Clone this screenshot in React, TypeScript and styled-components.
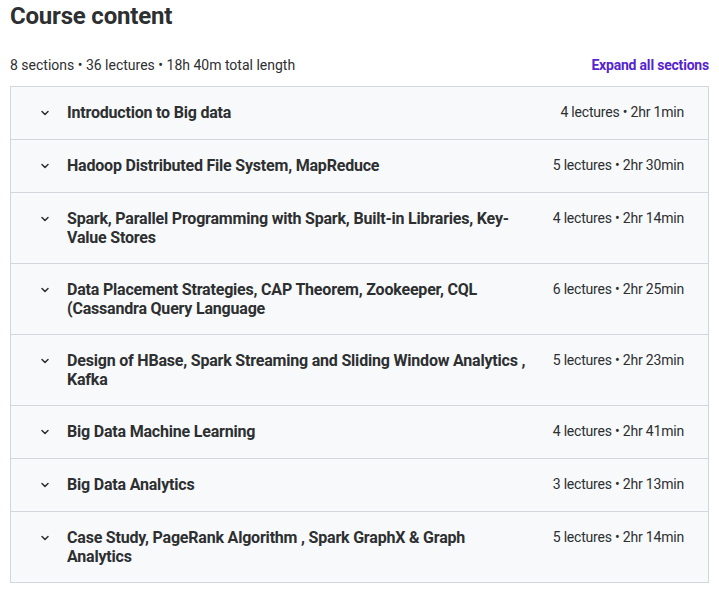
import React from 'react';
import styled, { createGlobalStyle } from 'styled-components';

const GlobalStyle = createGlobalStyle`
    body {
        margin: 0;
        background: #ffffff;
        font-family: Roboto, "Liberation Sans", sans-serif;
        color: #2d2f31;
    }
`;

const Page = styled.div`
    padding: 0 10px;
`;

const Title = styled.h2`
    margin: 0;
    padding-top: 3px;
    font-size: 24px;
    font-weight: 700;
    line-height: 26px;
    letter-spacing: -0.2px;
`;

const MetaRow = styled.div`
    display: flex;
    align-items: center;
    justify-content: space-between;
    margin-top: 26px;
    margin-bottom: 11px;
    font-size: 14px;
    line-height: 20px;
`;

const ExpandLink = styled.button`
    border: none;
    background: none;
    padding: 0;
    font-family: inherit;
    font-size: 14px;
    font-weight: 700;
    letter-spacing: -0.2px;
    color: #5624d0;
    cursor: pointer;
`;

const Accordion = styled.div`
    border: 1px solid #d1d7dc;
    border-bottom: none;
`;

const SectionRow = styled.div`
    display: flex;
    align-items: flex-start;
    padding: 16px 24px;
    background: #f7f9fa;
    border-bottom: 1px solid #d1d7dc;
`;

const ChevronBox = styled.span`
    display: flex;
    align-items: center;
    justify-content: center;
    width: 20px;
    height: 20px;
    margin-right: 12px;
    flex-shrink: 0;
`;

const SectionTitle = styled.div`
    flex: 1;
    font-size: 16px;
    font-weight: 700;
    line-height: 19px;
    letter-spacing: -0.2px;
    margin-right: 24px;
`;

const SectionStats = styled.div`
    font-size: 14px;
    line-height: 19px;
    letter-spacing: -0.2px;
    white-space: nowrap;
    flex-shrink: 0;
    min-width: 131px;
    text-align: right;
`;

const Chevron = () => (
    <svg width="12" height="12" viewBox="0 0 24 24" fill="none" stroke="#2d2f31" strokeWidth="3" strokeLinecap="round" strokeLinejoin="round">
        <polyline points="6 9 12 15 18 9" />
    </svg>
);

const sections = [
    { title: 'Introduction to Big data', stats: '4 lectures • 2hr 1min' },
    { title: 'Hadoop Distributed File System, MapReduce', stats: '5 lectures • 2hr 30min' },
    { title: 'Spark, Parallel Programming with Spark, Built-in Libraries, Key-Value Stores', stats: '4 lectures • 2hr 14min' },
    { title: 'Data Placement Strategies, CAP Theorem, Zookeeper, CQL (Cassandra Query Language', stats: '6 lectures • 2hr 25min' },
    { title: 'Design of HBase, Spark Streaming and Sliding Window Analytics , Kafka', stats: '5 lectures • 2hr 23min' },
    { title: 'Big Data Machine Learning', stats: '4 lectures • 2hr 41min' },
    { title: 'Big Data Analytics', stats: '3 lectures • 2hr 13min' },
    { title: 'Case Study, PageRank Algorithm , Spark GraphX & Graph Analytics', stats: '5 lectures • 2hr 14min' },
];

const App: React.FunctionComponent = () => (
    <Page>
        <GlobalStyle />
        <Title>Course content</Title>
        <MetaRow>
            <span>8 sections • 36 lectures • 18h 40m total length</span>
            <ExpandLink>Expand all sections</ExpandLink>
        </MetaRow>
        <Accordion>
            {sections.map(section => (
                <SectionRow key={section.title}>
                    <ChevronBox><Chevron /></ChevronBox>
                    <SectionTitle>{section.title}</SectionTitle>
                    <SectionStats>{section.stats}</SectionStats>
                </SectionRow>
            ))}
        </Accordion>
    </Page>
);

export default App;
